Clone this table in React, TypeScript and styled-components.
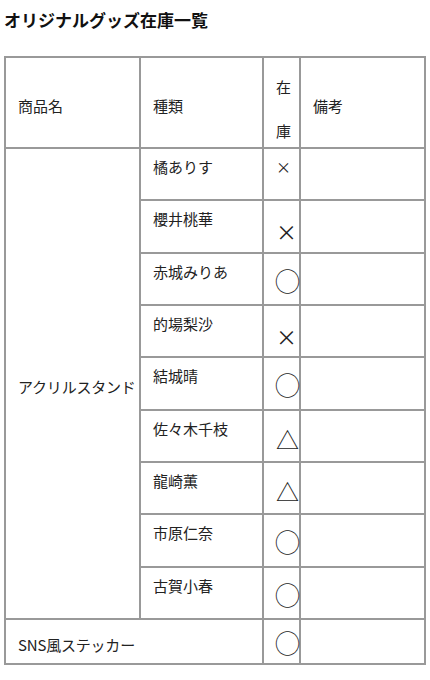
import React from 'react';
import styled, { createGlobalStyle } from 'styled-components';

const GlobalStyle = createGlobalStyle`
  body {
    margin: 0;
    background: #fff;
    color: #222;
    font-family: "Noto Sans CJK JP", "Noto Sans", sans-serif;
  }
`;

const Page = styled.div`
  padding: 0 4px;
`;

const Title = styled.h1`
  margin: 8px 0 0;
  font-size: 17px;
  line-height: 24px;
  font-weight: 700;
  color: #111;
`;

const Table = styled.table`
  margin-top: 24px;
  width: 422px;
  table-layout: fixed;
  border-collapse: collapse;
  font-size: 15px;
  line-height: 22px;

  td,
  th {
    border: 2px solid #999;
  }
`;

const HeadRow = styled.tr`
  height: 90px;
`;

const BodyRow = styled.tr<{ $h: number }>`
  height: ${p => p.$h}px;
`;

const HeadCell = styled.th`
  padding: 6px 12px 0;
  text-align: left;
  font-weight: 400;
  vertical-align: middle;
`;

const StockHead = styled.th`
  padding: 0 12px;
  font-weight: 400;
  vertical-align: top;
`;

const StockHeadText = styled.div`
  margin-top: 7px;
  height: 82px;
  line-height: 44px;
`;

const Cell = styled.td`
  padding: 7px 12px 0;
  vertical-align: top;
`;

const MiddleCell = styled.td`
  padding: 7px 0 0 12px;
  vertical-align: middle;
  white-space: nowrap;
  letter-spacing: -0.2px;
`;

const StockCell = styled.td`
  padding: 7px 0 0 12px;
  vertical-align: top;
  overflow: visible;
`;

type Kind = 'xs' | 'x' | 'o' | 't';

const marks: Record<Kind, { glyph: string; size: number; top: number }> = {
  xs: { glyph: '×', size: 15, top: 0 },
  x: { glyph: '×', size: 21, top: 12 },
  o: { glyph: '◯', size: 25, top: 8 },
  t: { glyph: '△', size: 23, top: 10 },
};

const MarkText = styled.span<{ $size: number; $top: number }>`
  display: block;
  height: 22px;
  line-height: 22px;
  margin-top: ${p => p.$top}px;
  margin-left: ${p => (p.$size > 24 ? -1 : 0)}px;
  font-size: ${p => p.$size}px;
  white-space: nowrap;
`;

const Mark = ({ kind, top }: { kind: Kind; top?: number }) => {
  const m = marks[kind];
  return (
    <MarkText $size={m.size} $top={top ?? m.top}>
      {m.glyph}
    </MarkText>
  );
};

const rows: { name: string; mark: Kind }[] = [
  { name: '橘ありす', mark: 'xs' },
  { name: '櫻井桃華', mark: 'x' },
  { name: '赤城みりあ', mark: 'o' },
  { name: '的場梨沙', mark: 'x' },
  { name: '結城晴', mark: 'o' },
  { name: '佐々木千枝', mark: 't' },
  { name: '龍崎薫', mark: 't' },
  { name: '市原仁奈', mark: 'o' },
  { name: '古賀小春', mark: 'o' },
];

export default function App() {
  return (
    <Page>
      <GlobalStyle />
      <Title>オリジナルグッズ在庫一覧</Title>
      <Table>
        <colgroup>
          <col style={{ width: 135 }} />
          <col style={{ width: 123 }} />
          <col style={{ width: 37 }} />
          <col style={{ width: 125 }} />
        </colgroup>
        <thead>
          <HeadRow>
            <HeadCell>商品名</HeadCell>
            <HeadCell>種類</HeadCell>
            <StockHead>
              <StockHeadText>在庫</StockHeadText>
            </StockHead>
            <HeadCell>備考</HeadCell>
          </HeadRow>
        </thead>
        <tbody>
          {rows.map((r, i) => (
            <BodyRow key={r.name} $h={i % 3 === 0 ? 52 : 52.5}>
              {i === 0 && <MiddleCell rowSpan={rows.length}>アクリルスタンド</MiddleCell>}
              <Cell>{r.name}</Cell>
              <StockCell>
                <Mark kind={r.mark} />
              </StockCell>
              <Cell />
            </BodyRow>
          ))}
          <BodyRow $h={45}>
            <MiddleCell colSpan={2}>SNS風ステッカー</MiddleCell>
            <StockCell>
              <Mark kind="o" top={4} />
            </StockCell>
            <Cell />
          </BodyRow>
        </tbody>
      </Table>
    </Page>
  );
}
